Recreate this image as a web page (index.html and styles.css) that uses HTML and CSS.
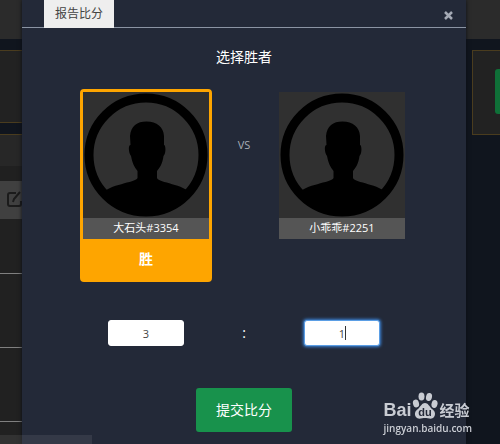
FILE: index.html
```
<!DOCTYPE html>
<html lang="zh-CN">
<head>
<meta charset="utf-8">
<title>报告比分</title>
<link rel="stylesheet" href="styles.css">
</head>
<body>
<svg class="defs" aria-hidden="true">
  <symbol id="avatar" viewBox="0 0 126 126">
    <clipPath id="disc"><circle cx="63" cy="63" r="60"/></clipPath>
    <circle cx="63" cy="63" r="57" fill="none" stroke="#000" stroke-width="9"/>
    <path clip-path="url(#disc)" d="M63.500 29.500C74 29.500 80.500 35 81 44L81 53C83 53 83 62 80.500 64C79.500 72 76.500 76 74 79L74 86C76 91 101 92 108 102L108 126H19V102C26 92 52 91 54.500 86V79C51 75 49 70 48 64C45.500 61 45 53 47.500 53L47 44C48 34 54 29.500 63.500 29.500Z"/>
  </symbol>
</svg>
<div class="page">
  <aside class="side">
    <div class="side-top"></div>
    <div class="side-panel"></div>
    <div class="side-head"></div>
    <div class="side-gap"></div>
    <div class="side-tool">
      <svg width="22" height="18" viewBox="0 0 22 18" fill="none" stroke="#1b1b1b" stroke-width="2"><path d="M16 2H10Q8 2 8 4V13Q8 15 10 15H19Q21 15 21 13V10M13 11L14 8L20 1"/></svg>
    </div>
    <div class="side-row"></div>
    <div class="side-row"></div>
    <div class="side-row"></div>
    <div class="side-rest"></div>
  </aside>
  <main class="dialog">
    <header class="dialog-head">
      <h1 class="tab">报告比分</h1>
      <button class="close" type="button" aria-label="关闭"><svg width="9" height="9" viewBox="0 0 9 9" stroke="#a4a9b4" stroke-width="2.500"><path d="M1 1L8 8M8 1L1 8"/></svg></button>
    </header>
    <form class="form">
      <h2 class="title">选择胜者</h2>
      <div class="versus">
        <button class="player winner" type="button">
          <svg class="avatar" viewBox="0 0 126 126"><use href="#avatar"/></svg>
          <span class="name">大石头#3354</span>
          <span class="win">胜</span>
        </button>
        <span class="vs">VS</span>
        <button class="player" type="button">
          <svg class="avatar" viewBox="0 0 126 126"><use href="#avatar"/></svg>
          <span class="name">小乖乖#2251</span>
        </button>
      </div>
      <div class="scores">
        <input class="score" type="text" value="3" aria-label="大石头#3354 比分">
        <span class="colon">:</span>
        <span class="field">
          <input class="score active" type="text" value="1" aria-label="小乖乖#2251 比分">
          <span class="caret"></span>
        </span>
      </div>
      <button class="submit" type="submit">提交比分</button>
    </form>
  </main>
  <aside class="side">
    <div class="side-top"></div>
    <div class="card"><div class="card-button"></div></div>
  </aside>
</div>
<div class="status"></div>
<div class="watermark">
  <div class="brand">
    <span class="bai">Bai</span>
    <svg class="paw" width="26" height="28" viewBox="0 0 26 28" fill="#c9ccd3">
      <ellipse cx="4" cy="11.500" rx="3" ry="4" transform="rotate(-15 4 11.500)"/>
      <ellipse cx="9.500" cy="4.500" rx="3" ry="4"/>
      <ellipse cx="17" cy="5" rx="3" ry="4" transform="rotate(12 17 5)"/>
      <ellipse cx="22.500" cy="12" rx="3" ry="4" transform="rotate(12 22.500 12)"/>
      <path d="M13 11C16 11 17 14 20 17C23 19 24 22 22 25C20 28 16 26 13 26C10 26 6 28 4 25C2 22 3 19 6 17C9 14 10 11 13 11Z"/>
      <text class="du" x="13" y="24" text-anchor="middle">du</text>
    </svg>
    <span class="jing">经验</span>
  </div>
  <div class="host">jingyan.baidu.com</div>
</div>
</body>
</html>
```
FILE: styles.css
```
* { box-sizing: border-box; }
body {
  margin: 0;
  overflow: hidden;
  background: #10151e;
  color: #fff;
  font: 12px/20px "Open Sans", "Noto Sans CJK SC", sans-serif;
}
button, input { font: inherit; color: inherit; margin: 0; }
.defs { position: absolute; width: 0; height: 0; }
.page {
  display: grid;
  grid-template-columns: 22px 1fr 34px;
  min-height: 100vh;
}
.side { display: flex; flex-direction: column; overflow: hidden; }
.side-top { height: 39px; background: #2b2b2b; margin-bottom: 11px; }
.side-panel {
  height: 73px;
  margin-bottom: 11px;
  background: #222;
  border: solid #4a3c1e;
  border-width: 1px 0;
}
.side-head { height: 32px; background: #272727; border-top: 1px solid #4a3c1e; }
.side-gap { height: 15px; background: #202020; }
.side-tool { height: 38px; background: #404040; padding-top: 10px; }
.side-tool svg { display: block; }
.side-row { height: 74px; background: #212121; border-bottom: 1px solid #808080; }
.side-tool + .side-row { height: 55px; }
.side-rest { flex: 1; background: #212121; }
.card {
  height: 85px;
  margin-left: 6px;
  padding: 18px 0 0 22px;
  background: #222;
  border: 1px solid #4a3c1e;
  border-right: 0;
}
.card-button { height: 45px; background: #0f7038; border-radius: 3px 0 0 3px; }
.dialog { background: #232938; box-shadow: 0 0 4px #0b0e14; z-index: 1; }
.dialog-head {
  display: flex;
  justify-content: space-between;
  height: 28px;
  padding: 0 12px 0 22px;
  border-bottom: 1px solid #8b94a3;
}
.tab {
  margin: 0;
  height: 28px;
  padding: 4px 11px;
  background: #eee;
  color: #444;
  font-size: 12px;
  font-weight: 400;
}
.close { padding: 3px 1px 0; border: 0; background: none; }
.close svg { display: block; }
.form {
  display: flex;
  flex-direction: column;
  align-items: center;
  padding-top: 19px;
}
.title { margin: 0 0 22px; font-size: 14px; font-weight: 400; }
.versus, .scores {
  display: grid;
  grid-template-columns: 132px 64px 132px;
  justify-items: center;
}
.player {
  display: flex;
  flex-direction: column;
  align-self: start;
  width: 132px;
  padding: 0;
  border: 3px solid transparent;
  border-radius: 4px;
  background: none;
}
.winner { background: #fea500; border-color: #fea500; }
.avatar { display: block; width: 100%; background: #303030; }
.name {
  width: 100%;
  height: 21px;
  background: #555;
  font-size: 11px;
  line-height: 20px;
}
.win { width: 100%; padding: 10px 0; font-size: 14px; font-weight: 700; }
.vs { margin-top: 46px; color: #a9adb6; font-size: 11px; }
.scores { margin-top: 38px; align-items: center; }
.score {
  display: block;
  width: 76px;
  height: 26px;
  padding: 0;
  border: 1px solid #fff;
  border-radius: 3px;
  background: #fff;
  color: #444;
  font-size: 11px;
  text-align: center;
}
.score.active { border-color: #5b9ee5; box-shadow: 0 0 3px 1px #3c83d6; }
.field { position: relative; }
.caret {
  position: absolute;
  left: 41px;
  top: 6px;
  width: 1px;
  height: 14px;
  background: #333;
}
.colon { font-size: 14px; }
.submit {
  margin-top: 42px;
  padding: 12px 20px;
  border: 0;
  border-radius: 3px;
  background: #18924c;
  font-size: 14px;
}
.status {
  position: fixed;
  z-index: 2;
  left: 0;
  bottom: 0;
  width: 92px;
  height: 9px;
  background: rgba(255, 255, 255, 0.08);
}
.watermark {
  position: fixed;
  z-index: 2;
  right: 28px;
  bottom: 8px;
  color: #c9ccd3;
}
.brand { display: flex; align-items: flex-end; height: 28px; }
.bai { font: 700 18px/20px "Liberation Sans", sans-serif; }
.du { font: 700 11px "Liberation Sans", sans-serif; fill: #232938; }
.jing { margin-left: 2px; font-size: 15px; font-weight: 700; }
.host { font-size: 10px; font-weight: 600; line-height: 16px; }
```
